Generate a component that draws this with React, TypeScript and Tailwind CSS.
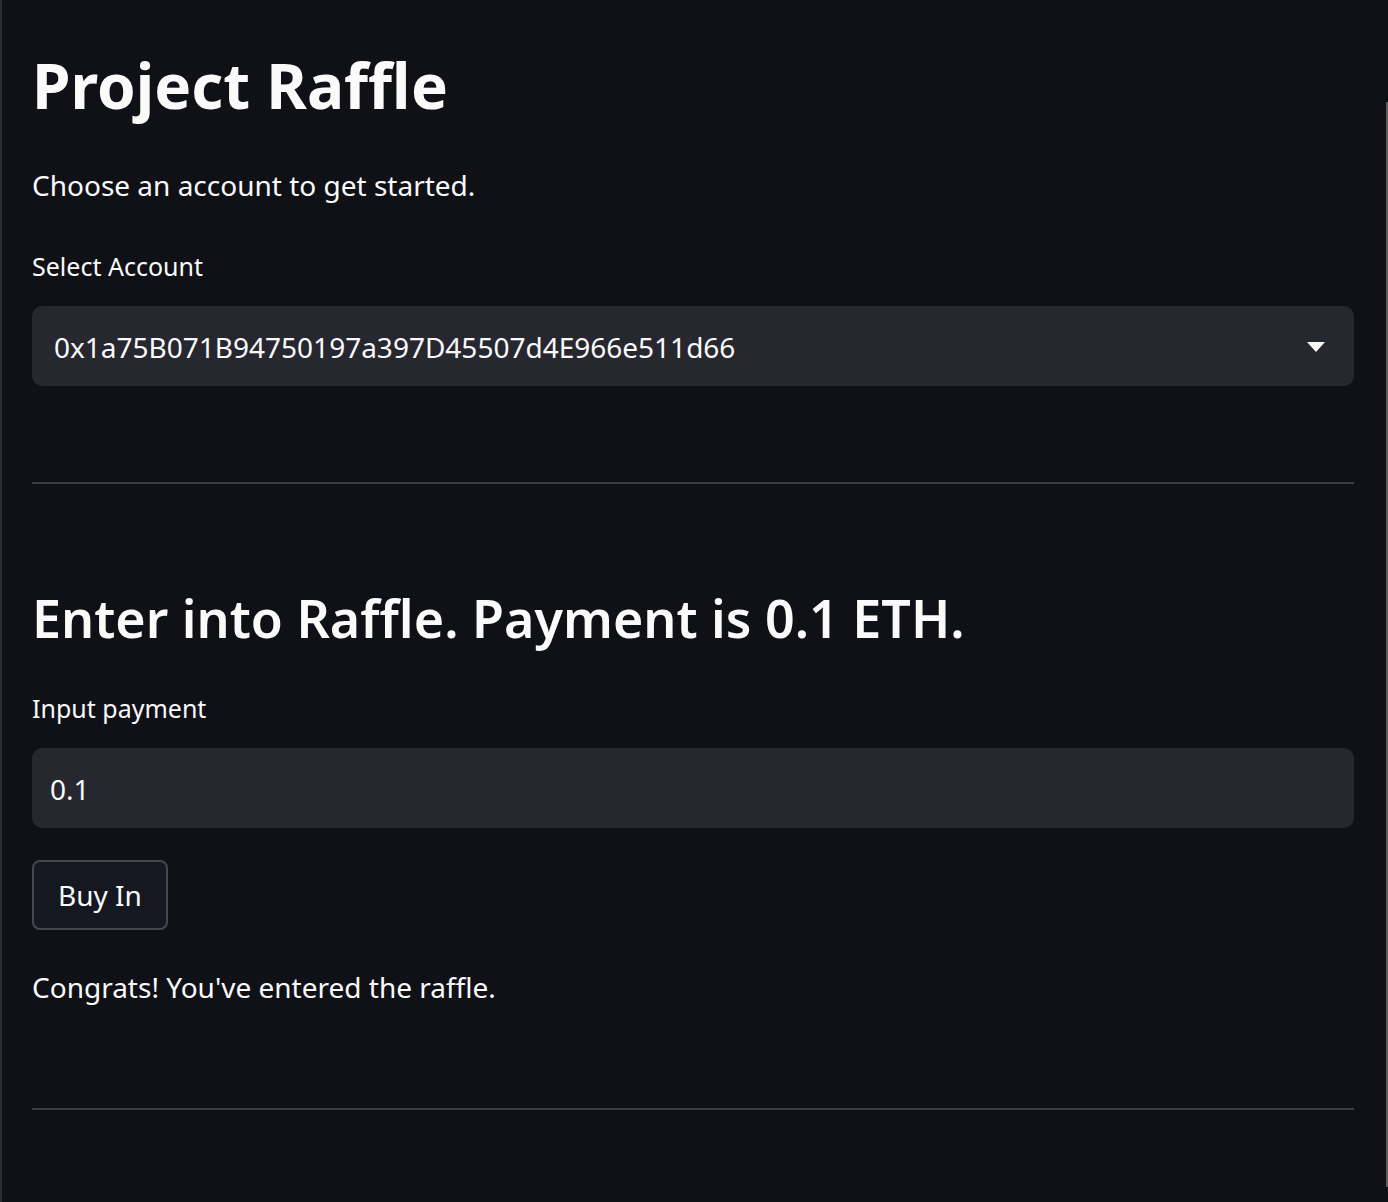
import React from "react";

const font = { fontFamily: '"Noto Sans", "Open Sans", sans-serif' };

export default function App() {
  return (
    <div
      className="relative w-[1388px] h-[1202px] overflow-hidden bg-[#0f1117] border-l-2 border-[#2b2d33] text-[#fafafa]"
      style={font}
    >
      <div className="absolute right-0 top-[102px] w-[2px] h-[1085px] bg-[#5c5c5c]" />
      <div className="flex flex-col pl-[30px] pr-[34px] pt-[45px]">
        <h1 className="text-[62px] leading-[80px] font-bold h-[80px] whitespace-nowrap">Project Raffle</h1>
        <p className="mt-[40px] text-[28px] leading-[40px] h-[40px] whitespace-nowrap">Choose an account to get started.</p>
        <label className="mt-[45px] text-[25px] leading-[32px] h-[32px] whitespace-nowrap">Select Account</label>
        <div className="mt-[24px] h-[80px] rounded-[10px] bg-[#26272f] flex items-center justify-between pl-[22px] pr-[29px]">
          <span className="text-[28px] leading-[40px] whitespace-nowrap mt-[2px]">0x1a75B071B94750197a397D45507d4E966e511d66</span>
          <svg width="18" height="10" viewBox="0 0 18 10" className="mt-[1px]">
            <polygon points="0,0 18,0 9,10" fill="#fafafa" />
          </svg>
        </div>
        <div className="mt-[96px] h-[2px] bg-[#3b3d44]" />
        <h2 className="mt-[102px] text-[52px] leading-[64px] h-[64px] font-semibold whitespace-nowrap">Enter into Raffle. Payment is 0.1 ETH.</h2>
        <label className="mt-[42px] text-[25px] leading-[32px] h-[32px] whitespace-nowrap">Input payment</label>
        <div className="mt-[24px] h-[80px] rounded-[10px] bg-[#26272f] flex items-center pl-[18px]">
          <span className="text-[28px] leading-[40px] mt-[2px]">0.1</span>
        </div>
        <div className="mt-[32px]">
          <button className="h-[70px] px-[24px] rounded-[8px] border-2 border-[#45474e] bg-[#151820] text-[28px] leading-[40px] text-[#fafafa]" style={font}>
            Buy In
          </button>
        </div>
        <p className="mt-[37px] text-[28px] leading-[40px] h-[40px] whitespace-nowrap">Congrats! You've entered the raffle.</p>
        <div className="mt-[101px] h-[2px] bg-[#3b3d44]" />
      </div>
    </div>
  );
}
